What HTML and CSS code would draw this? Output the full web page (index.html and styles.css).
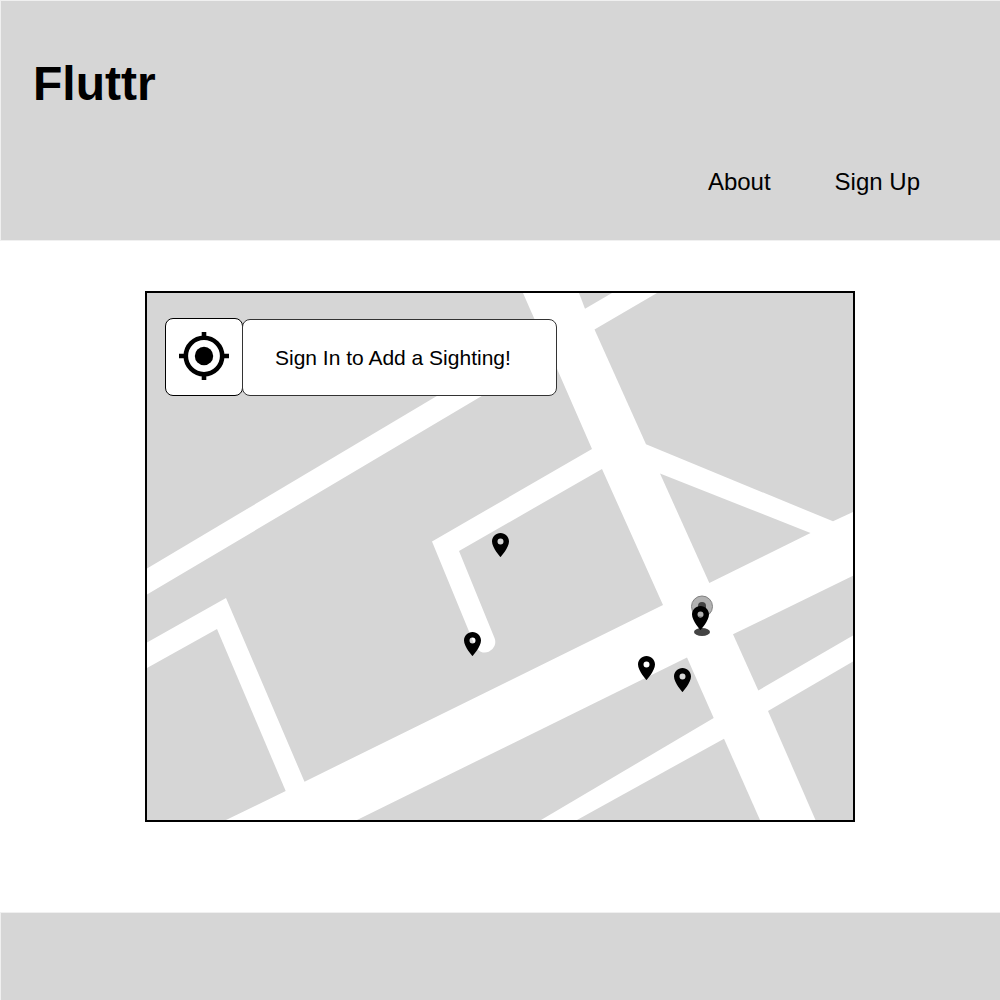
FILE: index.html
```html
<!DOCTYPE html>
<html lang="en">
<head>
  <meta charset="utf-8">
  <meta name="viewport" content="width=device-width, initial-scale=1">
  <title>Fluttr</title>
  <link rel="stylesheet" href="styles.css">
</head>
<body>
  <header class="site-header">
    <h1 class="brand">Fluttr</h1>
    <nav class="site-nav">
      <a href="#about">About</a>
      <a href="#signup">Sign Up</a>
    </nav>
  </header>

  <main class="content">
    <section class="map" aria-label="Sightings map">
      <svg class="map-canvas" viewBox="147 293 706 527" aria-hidden="true">
        <defs>
          <path id="pin" fill-rule="evenodd" d="M0-24C-4.7-24-8.5-20.2-8.5-15.6C-8.5-9.3 0 0 0 0S8.5-9.3 8.5-15.6C8.5-20.2 4.7-24 0-24ZM0-12.6A3 3 0 1 1 0-18.6A3 3 0 0 1 0-12.6Z"/>
        </defs>
        <!-- city blocks -->
        <g class="blocks">
          <path d="M147 293H523L541 334L147 568.5Z"/>
          <path d="M147 594.5L551 355L592 449L602 469L663 605L304.5 781.7L226 598L147 642.5Z"/>
          <path d="M147 668L217 629L285.7 791L226 820H147Z"/>
          <path d="M579 293H612L585 308.7Z"/>
          <path d="M657 293H853V512L833 521.3L646 444.3L594.5 329.5Z"/>
          <path d="M660 473.5L810.5 533L709.3 583Z"/>
          <path d="M853 575.7L733 634.3L758.3 690.5L853 635.5Z"/>
          <path d="M853 661.5L768 711L815.5 820H853Z"/>
          <path d="M687 657.5L713.7 718L541 820H357Z"/>
          <path d="M724 738.7L760 820H577Z"/>
        </g>
        <path class="lane" d="M592 449L432 541.5L475 646A10.5 10.5 0 0 0 494.5 638L459 551L602 469L612 463L602 443Z"/>
        <!-- current position -->
        <circle class="position-halo" cx="702" cy="606.5" r="10.5"/>
        <path class="position-base" d="M698 610V606A4 4 0 0 1 706 606V610Z"/>
        <ellipse class="position-base" cx="702" cy="632" rx="8" ry="4"/>
        <!-- sightings -->
        <use href="#pin" x="500.500" y="557"/>
        <use href="#pin" x="472.500" y="656"/>
        <use href="#pin" x="646.500" y="680"/>
        <use href="#pin" x="682.500" y="692"/>
        <use href="#pin" x="700.500" y="630"/>
      </svg>
      <div class="map-controls">
        <button class="locate" type="button" aria-label="Find my location">
          <svg width="50" height="50" viewBox="0 0 50 50" aria-hidden="true">
            <circle cx="25" cy="25" r="18.200" fill="none" stroke="#000" stroke-width="4.600"/>
            <circle cx="25" cy="25" r="9.200"/>
            <path d="M22.700 1h4.600v6h-4.600zM22.700 43h4.600v6h-4.600zM0 22.700h6v4.600H0zM44 22.700h6v4.600h-6z"/>
          </svg>
        </button>
        <button class="sign-in" type="button">Sign In to Add a Sighting!</button>
      </div>
    </section>
  </main>

  <footer class="site-footer"></footer>
</body>
</html>
```
FILE: styles.css
```css
* {
  box-sizing: border-box;
}

body {
  display: flex;
  flex-direction: column;
  min-height: 100vh;
  margin: 0;
  background: #fff;
  color: #000;
  font-family: "Liberation Sans", Arial, sans-serif;
}

.site-header {
  display: flex;
  flex-direction: column;
  gap: 56px;
  padding: 55px 80px 44px 32px;
  border: 1px solid #f0f0f0;
  border-right: 0;
  background: #d6d6d6;
}

.brand {
  margin: 0;
  font-size: 48px;
  line-height: 56px;
}

.site-nav {
  display: flex;
  flex-wrap: wrap;
  justify-content: flex-end;
  gap: 64px;
  font-size: 24px;
  line-height: 28px;
}

.site-nav a {
  color: inherit;
  text-decoration: none;
}

.content {
  padding: 50px 0 90px;
}

.map {
  position: relative;
  width: 71%;
  margin: 0 auto;
  border: 2px solid #000;
}

.map-canvas {
  display: block;
  width: 100%;
}

.blocks {
  fill: #d6d6d6;
}

.lane {
  fill: #fff;
}

.position-halo {
  fill: #b2b2b2;
  stroke: #808080;
}

.position-base {
  fill: #444;
}

.map-controls {
  position: absolute;
  top: 25px;
  left: 18px;
  display: flex;
  align-items: flex-end;
}

.map-controls button {
  border: 1px solid #000;
  border-radius: 8px;
  background: #fff;
  color: inherit;
  font-family: inherit;
}

.locate {
  display: grid;
  place-items: center;
  width: 78px;
  height: 78px;
  padding: 0 0 2px;
}

.map-controls .sign-in {
  height: 77px;
  margin-left: -1px;
  padding: 0 45px 0 32px;
  border-color: #333;
  font-size: 21px;
  line-height: 24px;
}

.site-footer {
  flex: 1;
  min-height: 88px;
  border: solid #f0f0f0;
  border-width: 1px 0 0 1px;
  background: #d6d6d6;
}
```
